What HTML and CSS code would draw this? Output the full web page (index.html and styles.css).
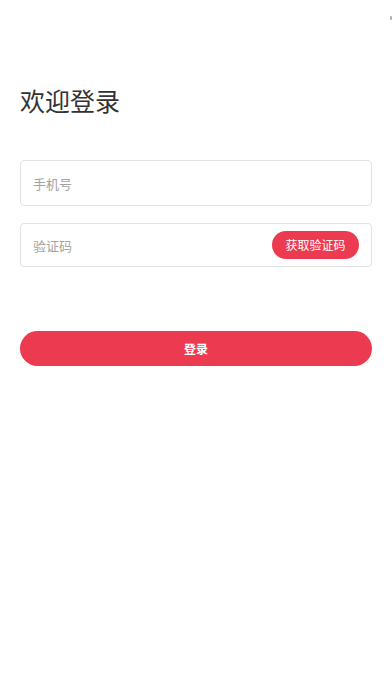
FILE: index.html
```html
<!DOCTYPE html>
<html lang="zh-CN">
<head>
<meta charset="utf-8">
<meta name="viewport" content="width=device-width, initial-scale=1">
<title>欢迎登录</title>
<link rel="stylesheet" href="styles.css">
</head>
<body>
<div class="scroll-dot"></div>
<main class="page">
  <h1 class="title">欢迎登录</h1>
  <form class="form">
    <div class="field field-phone">
      <input class="input" type="tel" placeholder="手机号">
    </div>
    <div class="field field-code">
      <input class="input" type="text" placeholder="验证码">
      <button type="button" class="code-btn">获取验证码</button>
    </div>
    <button type="button" class="login-btn">登录</button>
  </form>
</main>
</body>
</html>
```

FILE: styles.css
```css
* { box-sizing: border-box; }
html, body {
  margin: 0;
  padding: 0;
  background: #ffffff;
}
body {
  font-family: "Noto Sans CJK SC", "Noto Sans", sans-serif;
  color: #333333;
  width: 392px;
  height: 696px;
  position: relative;
  overflow: hidden;
}
.scroll-dot {
  position: absolute;
  right: 0;
  top: 16px;
  width: 2px;
  height: 4px;
  background: #b0b0b0;
  border-radius: 1px;
}
.page {
  padding: 88px 20px 0;
}
.title {
  margin: 0;
  font-size: 25px;
  line-height: 25px;
  font-weight: 400;
  color: #333333;
  letter-spacing: 0;
}
.form {
  margin-top: 47px;
  display: flex;
  flex-direction: column;
}
.field {
  display: flex;
  align-items: center;
  border: 1px solid #e2e2e2;
  border-radius: 4px;
  padding: 0 12px;
  background: #fff;
}
.field-phone { height: 46px; }
.field-code {
  height: 44px;
  margin-top: 17px;
  padding-right: 12px;
}
.input {
  flex: 1;
  min-width: 0;
  border: none;
  outline: none;
  background: transparent;
  font-family: inherit;
  font-size: 13px;
  color: #333;
  padding: 0;
}
.input::placeholder { color: #a3a3a3; }
.code-btn {
  flex: none;
  height: 28px;
  width: 87px;
  border: none;
  border-radius: 14px;
  background: #ec3b51;
  color: #ffffff;
  font-family: inherit;
  font-size: 12px;
  padding: 0;
  line-height: 28px;
}
.login-btn {
  margin-top: 64px;
  height: 35px;
  width: 100%;
  border: none;
  border-radius: 18px;
  background: #ec3b51;
  color: #ffffff;
  font-family: inherit;
  font-size: 12px;
  font-weight: 700;
  padding: 0;
}
```
